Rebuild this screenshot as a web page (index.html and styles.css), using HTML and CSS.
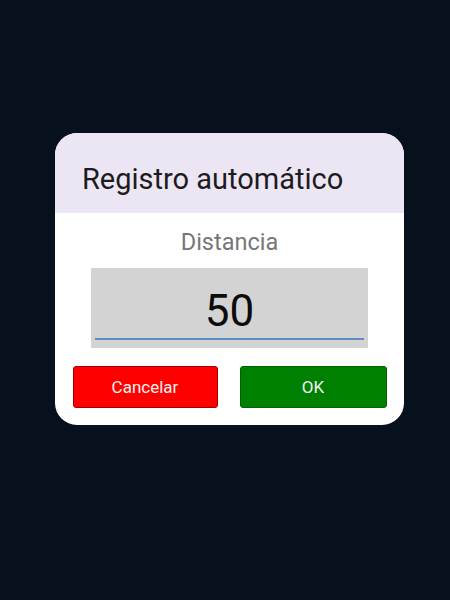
FILE: index.html
```html
<!DOCTYPE html>
<html>
<head>
<meta charset="utf-8">
<link rel="stylesheet" href="styles.css">
</head>
<body>
<div class="dialog">
  <div class="header">Registro automático</div>
  <div class="content">
    <div class="label">Distancia</div>
    <div class="field">
      <div class="value">50</div>
      <div class="underline"></div>
    </div>
    <div class="buttons">
      <div class="btn cancel">Cancelar</div>
      <div class="btn ok">OK</div>
    </div>
  </div>
</div>
</body>
</html>
```

FILE: styles.css
```css
html, body {
  margin: 0;
  padding: 0;
  width: 450px;
  height: 600px;
  background: #06111d;
  font-family: Roboto, "Liberation Sans", sans-serif;
}
body {
  padding-top: 133px;
  box-sizing: border-box;
}
.dialog {
  margin-left: 55px;
  width: 349px;
  height: 292px;
  background: #ffffff;
  border-radius: 22px;
  overflow: hidden;
}
.header {
  height: 80px;
  background: #ece6f4;
  color: #1d1b20;
  font-size: 29px;
  padding-left: 27px;
  line-height: 92px;
  box-sizing: border-box;
  height: 80px;
}
.content {
  display: flex;
  flex-direction: column;
  align-items: center;
}
.label {
  margin-top: 14px;
  font-size: 23.5px;
  line-height: 30px;
  color: #777777;
}
.field {
  margin-top: 11px;
  width: 277px;
  height: 80px;
  background: #d3d3d3;
  display: flex;
  flex-direction: column;
  align-items: center;
}
.value {
  font-size: 44px;
  line-height: 52px;
  color: #0c0c0c;
  margin-top: 17px;
}
.underline {
  width: 269px;
  height: 2px;
  background: #5b8dc0;
  margin-top: 1px;
}
.buttons {
  margin-top: 18px;
  width: 314px;
  display: flex;
  justify-content: space-between;
}
.btn {
  height: 42px;
  box-sizing: border-box;
  border-radius: 3px;
  display: flex;
  align-items: center;
  justify-content: center;
  font-size: 17px;
  color: #f2f2f2;
}
.cancel {
  width: 145px;
  background: #ff0000;
  border: 1px solid #a00000;
}
.ok {
  width: 147px;
  background: #008000;
  border: 1px solid #006400;
}
```
